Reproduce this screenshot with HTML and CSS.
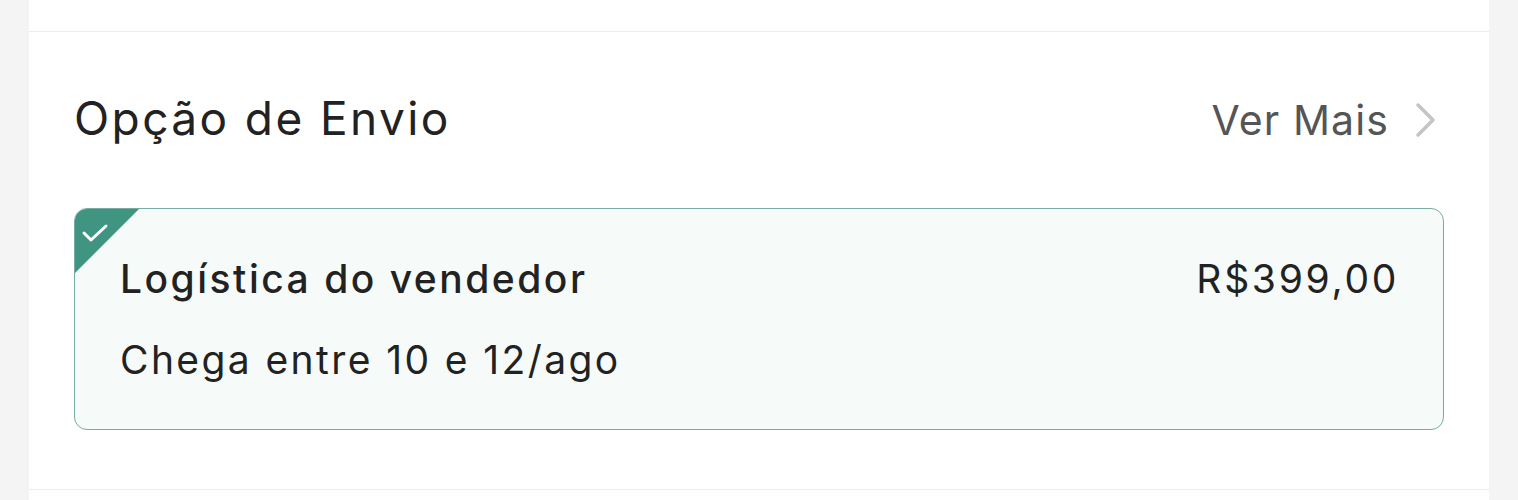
FILE: index.html
```html
<!DOCTYPE html>
<html lang="pt-BR">
<head>
<meta charset="utf-8">
<link rel="stylesheet" href="styles.css">
</head>
<body>
<div class="page">
  <div class="top-section"></div>
  <section class="shipping">
    <div class="shipping-header">
      <h2 class="shipping-title">Opção de Envio</h2>
      <a class="see-more" href="#">Ver Mais
        <svg class="chevron" width="22" height="36" viewBox="0 0 22 36"><path d="M3 3 L18 18 L3 33" fill="none" stroke="#c4c4c4" stroke-width="3.5" stroke-linecap="round" stroke-linejoin="round"/></svg>
      </a>
    </div>
    <div class="option-card">
      <div class="option-badge">
        <svg width="64" height="64" viewBox="0 0 64 64"><path d="M0 0 H64 L0 64 Z" fill="#3f9582"/><path d="M9 24 L16 31 L31 17" fill="none" stroke="#fff" stroke-width="3" stroke-linecap="round" stroke-linejoin="round"/></svg>
      </div>
      <div class="option-row">
        <span class="option-name">Logística do vendedor</span>
        <span class="option-price">R$399,00</span>
      </div>
      <div class="option-eta">Chega entre 10 e 12/ago</div>
    </div>
  </section>
  <div class="bottom-section"></div>
</div>
</body>
</html>
```
FILE: styles.css
```css
html, body {
  margin: 0;
  padding: 0;
  background: #f4f4f4;
  font-family: Inter, "Noto Sans", "Liberation Sans", sans-serif;
  overflow: hidden;
}
.page {
  margin: 0 29px;
  background: #ffffff;
  height: 500px;
}
.top-section {
  height: 31px;
  border-bottom: 1px solid #ececec;
}
.shipping {
  padding: 0 45px 59px 45px;
  border-bottom: 1px solid #ececec;
}
.shipping-header {
  display: flex;
  align-items: center;
  justify-content: space-between;
  height: 176px;
}
.shipping-title {
  margin: 0;
  font-size: 46px;
  font-weight: 400;
  color: #222222;
  letter-spacing: 2.4px;
  position: relative;
  top: -2px;
}
.see-more {
  display: flex;
  align-items: center;
  gap: 26px;
  font-size: 41px;
  letter-spacing: 1.1px;
  color: #555555;
  text-decoration: none;
  margin-right: 7px;
}
.chevron {
  display: block;
}
.option-card {
  position: relative;
  border: 1.5px solid #78aba2;
  border-radius: 13px;
  background: #f6fbfa;
  padding: 46px 46px 46px 45px;
  overflow: hidden;
}
.option-badge {
  position: absolute;
  left: 0;
  top: 0;
  width: 64px;
  height: 64px;
}
.option-badge svg {
  display: block;
}
.option-row {
  display: flex;
  justify-content: space-between;
  align-items: baseline;
  color: #222222;
}
.option-name {
  font-size: 39px;
  font-weight: 500;
  letter-spacing: 2.5px;
}
.option-price {
  font-size: 39px;
  font-weight: 400;
  letter-spacing: 2.7px;
  margin-right: -2px;
}
.option-eta {
  margin-top: 34px;
  font-size: 39px;
  letter-spacing: 2.4px;
  color: #222222;
}
```
